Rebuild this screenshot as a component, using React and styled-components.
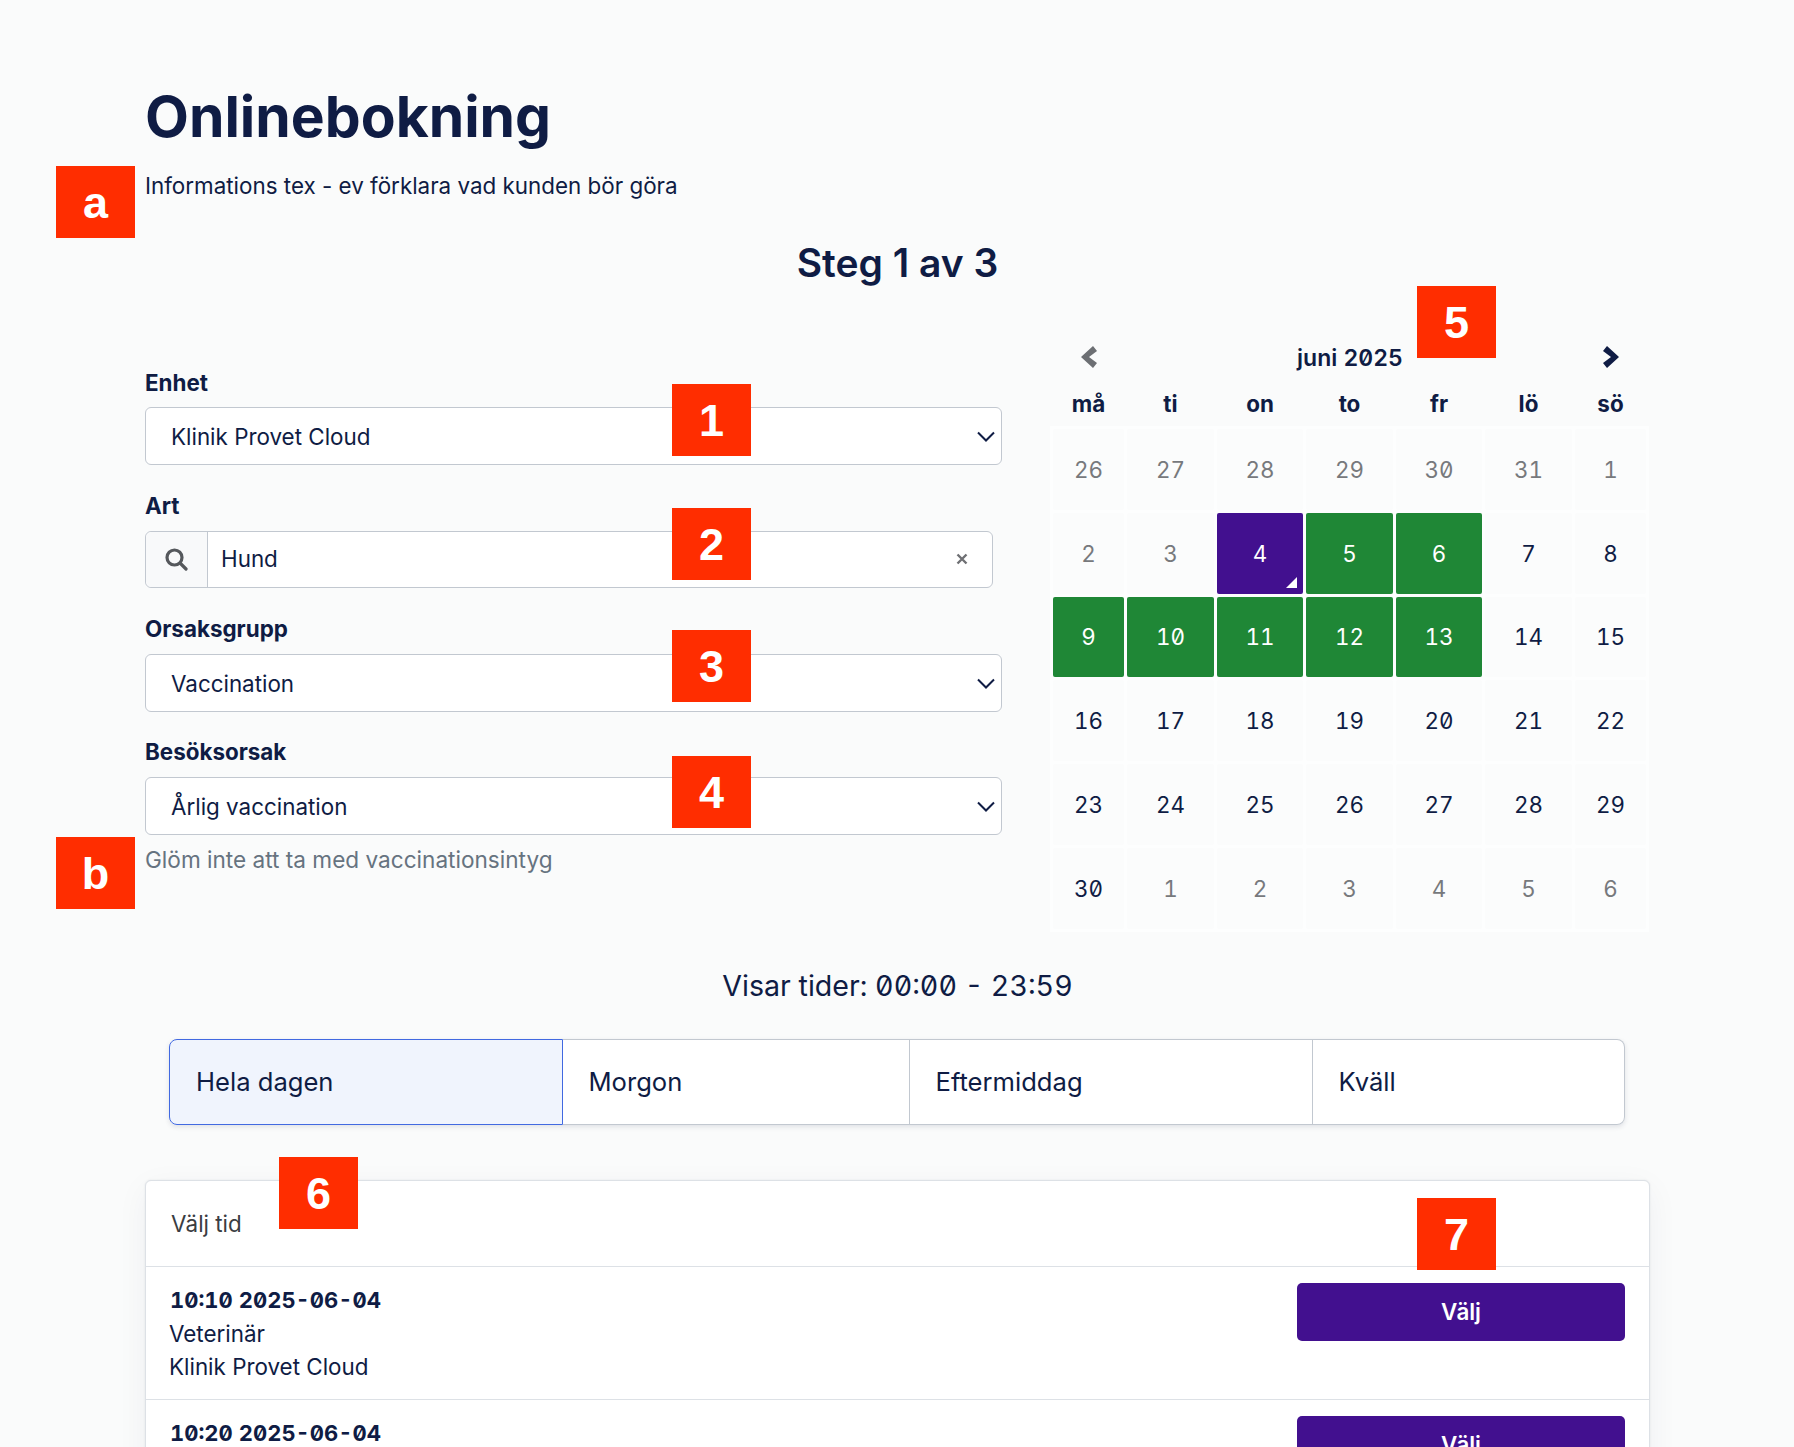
import React from 'react';
import styled, { createGlobalStyle } from 'styled-components';

const navy = '#0f1c44';

const GlobalStyle = createGlobalStyle`
  html, body {
    margin: 0;
    padding: 0;
    background: #fafbfb;
  }
  body {
    font-family: Inter, "Noto Sans", sans-serif;
    color: ${navy};
  }
`;

const Page = styled.div`
  position: relative;
  height: 1447px;
  overflow: hidden;
  padding: 83px 144px 0 145px;
  box-sizing: border-box;
`;

const Title = styled.h1`
  margin: 0 0 20px;
  font-size: 57px;
  line-height: 67px;
  font-weight: 700;
`;

const Info = styled.p`
  margin: 0 0 39px;
  font-size: 22.4px;
  line-height: 32px;
`;

const Step = styled.h2`
  margin: 0 0 49px;
  font-size: 39px;
  line-height: 44px;
  font-weight: 600;
  text-align: center;
`;

const Columns = styled.div`
  display: grid;
  grid-template-columns: 857px 600px;
  justify-content: space-between;
`;

const FormColumn = styled.div`
  padding-top: 34px;
`;

const Field = styled.div`
  min-height: 123px;
  &:first-child label {
    margin-bottom: 9px;
  }
`;

const Label = styled.label`
  display: block;
  margin-bottom: 10px;
  font-size: 22.4px;
  line-height: 30px;
  font-weight: 700;
`;

const SelectBox = styled.div`
  display: flex;
  align-items: center;
  justify-content: space-between;
  height: 58px;
  box-sizing: border-box;
  padding: 0 6px 0 25px;
  background: #fff;
  border: 1px solid #c2c8d0;
  border-radius: 6px;
  font-size: 22.4px;
`;

const SearchBox = styled.div`
  display: flex;
  align-items: stretch;
  width: 848px;
  height: 57px;
  box-sizing: border-box;
  background: #fff;
  border: 1px solid #c2c8d0;
  border-radius: 6px;
  font-size: 22.4px;
`;

const SearchAddon = styled.span`
  display: flex;
  align-items: center;
  justify-content: center;
  width: 61px;
  background: #f8f9fa;
  border-right: 1px solid #c2c8d0;
  border-radius: 6px 0 0 6px;
`;

const SearchValue = styled.span`
  display: flex;
  flex: 1;
  align-items: center;
  justify-content: space-between;
  padding: 0 24px 2px 13px;
`;

const Help = styled.p`
  margin: 10px 0 0;
  font-size: 22.6px;
  line-height: 30px;
  color: #667380;
`;

const CalendarNav = styled.div`
  display: flex;
  align-items: center;
  justify-content: space-between;
  height: 46px;
  padding: 0 31px;
  font-size: 23px;
  font-weight: 600;
  font-feature-settings: 'tnum', 'zero';
`;

const NavTitle = styled.span`
  padding-top: 2px;
`;

const NavArrow = styled.svg`
  width: 16px;
  height: 22px;
  fill: ${(p) => (p.$muted ? '#6c6f73' : navy)};
`;

const WeekdayTable = styled.table`
  width: 599px;
  table-layout: fixed;
  border-collapse: separate;
  border-spacing: 3px 0;
`;

const DaysTable = styled.table`
  width: 599px;
  table-layout: fixed;
  border-collapse: separate;
  border-spacing: 3px;
  background: #fdfefe;
`;

const DayHead = styled.th`
  height: 46px;
  padding: 0;
  font-size: 22.4px;
  font-weight: 700;
  text-align: center;
`;

const dayColours = {
  other: 'background: #fbfcfc; color: #77797c;',
  past: 'background: #fbfcfc; color: #77797c;',
  plain: 'background: #fbfcfc; color: ' + navy + ';',
  free: 'background: #1f8736; color: #fff;',
  selected: 'background: #42108f; color: #fff;',
};

const DayCell = styled.td`
  position: relative;
  height: 80.8px;
  padding: 0;
  border-radius: 2px;
  text-align: center;
  font-size: 22.4px;
  font-feature-settings: 'tnum', 'zero';
  ${(p) => dayColours[p.$kind]}
`;

const SelectedMark = styled.span`
  position: absolute;
  right: 6px;
  bottom: 6px;
  width: 0;
  height: 0;
  border-left: 11px solid transparent;
  border-bottom: 11px solid #fff;
`;

const Showing = styled.p`
  margin: 34px 0 33px;
  font-size: 28.6px;
  line-height: 40px;
  text-align: center;
  font-feature-settings: 'tnum', 'zero';
`;

const Tabs = styled.div`
  display: flex;
  width: 1455.5px;
  height: 86px;
  margin: 0 0 55px 24px;
  box-sizing: border-box;
  background: #fff;
  border-radius: 8px;
  box-shadow: 0 2px 5px rgba(30, 40, 70, 0.12);
`;

const Tab = styled.div`
  display: flex;
  align-items: center;
  box-sizing: border-box;
  width: ${(p) => p.$width}px;
  padding-left: 26px;
  font-size: 25.6px;
  border: 1px solid #c2c8d0;
  border-left-width: 0;
  &:first-child {
    border-left-width: 1px;
    border-radius: 8px 0 0 8px;
  }
  &:last-child {
    border-radius: 0 8px 8px 0;
  }
  ${(p) => p.$active && 'background: #f0f4fd; border-color: #4169e1; border-left-width: 1px;'}
`;

const Card = styled.div`
  background: #fff;
  border: 1px solid #dde1e6;
  border-radius: 6px;
  box-shadow: 0 0 2px rgba(30, 40, 70, 0.1), 0 8px 32px rgba(30, 40, 70, 0.05);
`;

const CardHeader = styled.div`
  height: 86px;
  box-sizing: border-box;
  padding: 28px 25px 0;
  font-size: 22.4px;
  line-height: 30px;
  color: #3a3d42;
  border-bottom: 1px solid #dde1e6;
`;

const SlotRow = styled.div`
  display: flex;
  align-items: flex-start;
  justify-content: space-between;
  height: 133px;
  box-sizing: border-box;
  padding: 16px 24px 0 23px;
  border-bottom: 1px solid #dde1e6;
`;

const SlotTime = styled.div`
  margin-left: 1px;
  font-size: 22px;
  line-height: 34px;
  font-weight: 700;
  font-feature-settings: 'tnum', 'zero';
`;

const SlotLine = styled.div`
  font-size: 22.4px;
  line-height: 33px;
`;

const PickButton = styled.button`
  width: 328px;
  height: 58px;
  border: 0;
  border-radius: 5px;
  background: #42108f;
  color: #fff;
  font-family: inherit;
  font-size: 22.4px;
  font-weight: 600;
`;

const Badge = styled.div`
  position: absolute;
  left: ${(p) => p.$left}px;
  top: ${(p) => p.$top}px;
  display: flex;
  align-items: center;
  justify-content: center;
  width: 79px;
  height: 72px;
  padding-top: 1px;
  box-sizing: border-box;
  background: #ff2d00;
  color: #fff;
  font-family: "Liberation Sans", Arial, sans-serif;
  font-size: 45px;
  font-weight: 700;
`;

const Chevron = () => (
  <svg width="18" height="11" viewBox="0 0 18 11" fill="none" stroke={navy} strokeWidth="2">
    <path d="M1 1.5l8 8 8-8" />
  </svg>
);

const SearchIcon = () => (
  <svg width="23" height="23" viewBox="0 0 23 23" fill="none" stroke="#55585c" strokeWidth="3.2" strokeLinecap="round">
    <circle cx="9.5" cy="9.5" r="7.5" />
    <path d="M15.5 15.5l5.5 5.5" />
  </svg>
);

const ClearIcon = () => (
  <svg width="12" height="12" viewBox="0 0 12 12" fill="none" stroke="#6f7074" strokeWidth="2.4">
    <path d="M1.5 1.5l9 9M10.5 1.5l-9 9" />
  </svg>
);

const weekdays = ['må', 'ti', 'on', 'to', 'fr', 'lö', 'sö'];
const colWidths = [71, 87, 86, 87, 86, 87, 71];

const weeks = [
  [[26, 'other'], [27, 'other'], [28, 'other'], [29, 'other'], [30, 'other'], [31, 'other'], [1, 'past']],
  [[2, 'past'], [3, 'past'], [4, 'selected'], [5, 'free'], [6, 'free'], [7, 'plain'], [8, 'plain']],
  [[9, 'free'], [10, 'free'], [11, 'free'], [12, 'free'], [13, 'free'], [14, 'plain'], [15, 'plain']],
  [[16, 'plain'], [17, 'plain'], [18, 'plain'], [19, 'plain'], [20, 'plain'], [21, 'plain'], [22, 'plain']],
  [[23, 'plain'], [24, 'plain'], [25, 'plain'], [26, 'plain'], [27, 'plain'], [28, 'plain'], [29, 'plain']],
  [[30, 'plain'], [1, 'other'], [2, 'other'], [3, 'other'], [4, 'other'], [5, 'other'], [6, 'other']],
];

const tabs = [
  { label: 'Hela dagen', width: 393.5, active: true },
  { label: 'Morgon', width: 347 },
  { label: 'Eftermiddag', width: 403 },
  { label: 'Kväll', width: 312 },
];

const slots = ['10:10 2025-06-04', '10:20 2025-06-04'];

const badges = [
  ['a', 56, 166],
  ['1', 672, 384],
  ['2', 672, 508],
  ['3', 672, 630],
  ['4', 672, 756],
  ['b', 56, 837],
  ['5', 1417, 286],
  ['6', 279, 1157],
  ['7', 1417, 1198],
];

const Columns7 = () => (
  <colgroup>
    {colWidths.map((w, i) => <col key={i} width={w} />)}
  </colgroup>
);

export default function App() {
  return (
    <Page>
      <GlobalStyle />
      <Title>Onlinebokning</Title>
      <Info>Informations tex - ev förklara vad kunden bör göra</Info>
      <Step>Steg 1 av 3</Step>

      <Columns>
        <FormColumn>
          <Field>
            <Label>Enhet</Label>
            <SelectBox>Klinik Provet Cloud<Chevron /></SelectBox>
          </Field>
          <Field>
            <Label>Art</Label>
            <SearchBox>
              <SearchAddon><SearchIcon /></SearchAddon>
              <SearchValue>Hund<ClearIcon /></SearchValue>
            </SearchBox>
          </Field>
          <Field>
            <Label>Orsaksgrupp</Label>
            <SelectBox>Vaccination<Chevron /></SelectBox>
          </Field>
          <Field>
            <Label>Besöksorsak</Label>
            <SelectBox>Årlig vaccination<Chevron /></SelectBox>
            <Help>Glöm inte att ta med vaccinationsintyg</Help>
          </Field>
        </FormColumn>

        <div>
          <CalendarNav>
            <NavArrow $muted viewBox="0 0 16 22"><path d="M0 11L12 0l4 5-8 6 8 6-4 5z" /></NavArrow>
            <NavTitle>juni 2025</NavTitle>
            <NavArrow viewBox="0 0 16 22"><path d="M16 11L4 0 0 5l8 6-8 6 4 5z" /></NavArrow>
          </CalendarNav>
          <WeekdayTable>
            <Columns7 />
            <thead>
              <tr>{weekdays.map((d) => <DayHead key={d}>{d}</DayHead>)}</tr>
            </thead>
          </WeekdayTable>
          <DaysTable>
            <Columns7 />
            <tbody>
              {weeks.map((week, i) => (
                <tr key={i}>
                  {week.map(([day, kind]) => (
                    <DayCell key={day + kind} $kind={kind}>
                      {day}
                      {kind === 'selected' && <SelectedMark />}
                    </DayCell>
                  ))}
                </tr>
              ))}
            </tbody>
          </DaysTable>
        </div>
      </Columns>

      <Showing>Visar tider: 00:00 - 23:59</Showing>

      <Tabs>
        {tabs.map((t) => <Tab key={t.label} $width={t.width} $active={t.active}>{t.label}</Tab>)}
      </Tabs>

      <Card>
        <CardHeader>Välj tid</CardHeader>
        {slots.map((s) => (
          <SlotRow key={s}>
            <div>
              <SlotTime>{s}</SlotTime>
              <SlotLine>Veterinär</SlotLine>
              <SlotLine>Klinik Provet Cloud</SlotLine>
            </div>
            <PickButton>Välj</PickButton>
          </SlotRow>
        ))}
      </Card>

      {badges.map(([text, left, top]) => <Badge key={text} $left={left} $top={top}>{text}</Badge>)}
    </Page>
  );
}
